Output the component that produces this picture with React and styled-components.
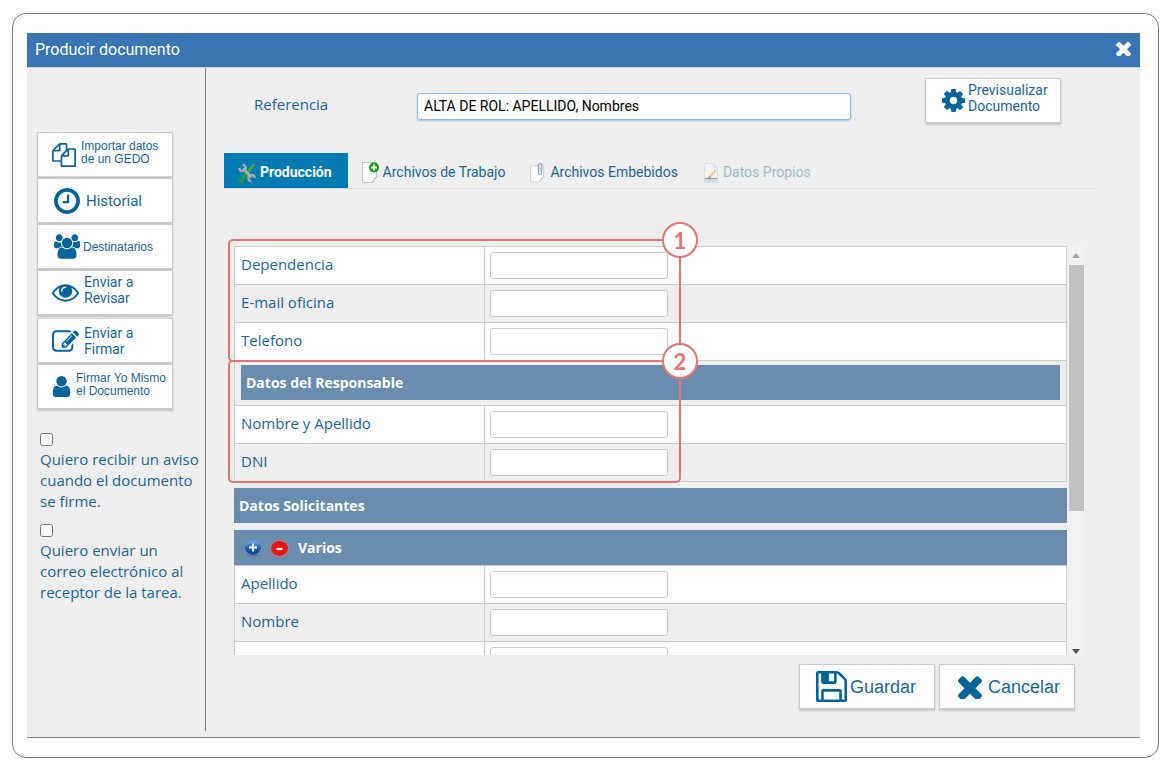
import React from "react";
import styled, { createGlobalStyle, css } from "styled-components";

const INK = "#1a6797";
const LINE = "#cccccc";
const PANEL = "#eeeeee";
const BAR = "#6a8caf";
const MARK = "#e57373";
const ARIAL = '"Liberation Sans", Arial, sans-serif';
const ROBOTO = 'Roboto, "Liberation Sans", sans-serif';
const OPEN = '"Open Sans", "Noto Sans", sans-serif';

const GlobalStyle = createGlobalStyle`
  *, *::before, *::after { box-sizing: border-box; }
  body { margin: 0; background: #fff; color: ${INK}; font: 15px/20px ${OPEN}; }
  button, input { font: inherit; color: inherit; }
`;

const Frame = styled.div`
  margin: 13px 15px 16px 12px;
  padding: 19px 18px 19px 14px;
  border: 1px solid #7d7d7d;
  border-radius: 14px;
`;

const Dialog = styled.section`
  background: ${PANEL};
  border-bottom: 1px solid #858585;
  padding-bottom: 6px;
`;

const TitleBar = styled.header`
  display: flex;
  align-items: center;
  justify-content: space-between;
  height: 35px;
  padding: 0 9px 1px 8px;
  background: #3975b3;
  border-bottom: 1px solid #c9d3de;
  color: #fff;
`;

const Title = styled.h1`
  margin: 0;
  font: 400 16px/20px ${ROBOTO};
`;

const CloseButton = styled.button`
  display: flex;
  padding: 0 0 2px;
  border: 0;
  background: none;
  cursor: pointer;
`;

const Body = styled.div`
  display: flex;
`;

const Sidebar = styled.aside`
  flex: 0 0 179px;
  padding: 64px 0 0 10px;
  border-right: 1px solid #858585;
`;

const ButtonGroup = styled.div`
  display: flex;
  flex-direction: column;
  gap: 1px;
  margin-bottom: 3px;
`;

const ActionButton = styled.button`
  display: flex;
  align-items: center;
  flex: none;
  gap: ${(p) => p.$gap ?? 5}px;
  width: 136px;
  height: 45px;
  padding: 0 0 0 ${(p) => p.$inset}px;
  border: 1px solid ${LINE};
  background: #fff;
  box-shadow: 0 2px 2px #c4c4c4;
  color: ${INK};
  font-family: ${(p) => (p.$roboto ? ROBOTO : ARIAL)};
  font-size: ${(p) => p.$size ?? 14}px;
  line-height: ${(p) => p.$line ?? 16}px;
  text-align: left;
  white-space: pre-line;
  cursor: pointer;
`;

const ButtonText = styled.span`
  padding-bottom: ${(p) => p.$raised ?? 0}px;
`;

const Notice = styled.div`
  display: flex;
  flex-direction: column;
  align-items: flex-start;
  gap: 3px;
  margin: ${(p) => (p.$first ? 24 : 12)}px 0 0 3px;
  line-height: 21px;
`;

const CheckBox = styled.input`
  width: 13px;
  height: 13px;
  margin: 0;
`;

const NoticeLabel = styled.label`
  white-space: pre;
`;

const Main = styled.main`
  flex: 1;
  min-width: 0;
  padding: 10px 45px 22px 18px;
`;

const ReferenceRow = styled.div`
  display: flex;
  align-items: flex-start;
  padding: 0 34px 0 30px;
`;

const ReferenceLabel = styled.label`
  flex: 0 0 163px;
  padding-top: 16px;
`;

const ReferenceInput = styled.input`
  flex: 1;
  min-width: 0;
  height: 27px;
  margin: 15px 74px 0 0;
  padding: 0 6px 2px;
  border: 1px solid #8fb9e3;
  border-radius: 3px;
  background: #fff;
  box-shadow: 0 1px 2px #9fc3e8;
  color: #000;
  font: 14px/20px ${ROBOTO};
`;

const Tabs = styled.nav`
  display: flex;
  height: 36px;
  margin-top: 30px;
  border-bottom: 1px solid #dddddd;
`;

const Tab = styled.button`
  display: flex;
  align-items: center;
  gap: 4px;
  height: 35px;
  padding: 2px 11px 0 14px;
  border: 0;
  background: none;
  color: ${INK};
  font: 14px/20px ${ROBOTO};
  white-space: nowrap;
  cursor: pointer;
  ${(p) =>
    p.$active &&
    css`
      padding: 2px 16px 0 14px;
      background: #047ab3;
      color: #fff;
      font-weight: 700;
    `}
  &:disabled {
    color: #9dbfd2;
    cursor: default;
  }
  svg {
    margin-top: 2px;
  }
`;

const FormArea = styled.div`
  position: relative;
  display: flex;
  height: 409px;
  margin: 57px 10px 0;
`;

const Scroller = styled.div`
  flex: 1;
  min-width: 0;
  overflow-y: auto;
  scrollbar-width: none;
`;

const Rows = styled.div`
  border: 1px solid ${LINE};
  border-top: 0;
  border-bottom-width: ${(p) => (p.$closed ? 1 : 0)}px;
`;

const Row = styled.div`
  display: grid;
  grid-template-columns: 250px 1fr;
  height: 38px;
  border-top: 1px solid ${LINE};
  background: ${(p) => (p.$shaded ? PANEL : "#fff")};
`;

const RowLabel = styled.label`
  padding: 7px 6px;
  border-right: 1px solid ${LINE};
`;

const FieldInput = styled.input`
  width: 178px;
  height: 27px;
  margin: 5px;
  padding: 0 6px;
  border: 1px solid ${LINE};
  border-radius: 3px;
  background: #fff;
`;

const NestedBar = styled.div`
  padding: 4px 6px 5px;
  border: 1px solid ${LINE};
  border-bottom: 0;
`;

const SectionBar = styled.h2`
  display: flex;
  align-items: center;
  height: 35px;
  margin: ${(p) => p.$top ?? 0}px 0 0;
  padding: 0 ${(p) => p.$inset ?? 5}px;
  background: ${BAR};
  color: #fff;
  font: 700 14px/20px ${OPEN};
`;

const RoundButton = styled.button`
  display: flex;
  margin-right: 8px;
  padding: 0;
  border: 0;
  background: none;
  cursor: pointer;
`;

const ScrollTrack = styled.div`
  display: flex;
  flex-direction: column;
  align-items: center;
  flex: 0 0 18px;
  padding: 7px 0 1px;
  background: #f1f1f1;
`;

const ScrollThumb = styled.div`
  width: 15px;
  height: 246px;
  margin: 7px 0 auto;
  background: #c1c1c1;
`;

const Arrow = styled.span`
  border: 4px solid transparent;
  ${(p) =>
    p.$down
      ? "border-top: 5px solid #505050; border-bottom: 0;"
      : "border-bottom: 5px solid #a3a3a3; border-top: 0;"}
`;

const Callout = styled.div`
  position: absolute;
  left: -6px;
  top: ${(p) => p.$top}px;
  width: 453px;
  height: 123px;
  border: 2px solid ${MARK};
  border-radius: 5px;
  pointer-events: none;
`;

const CalloutNumber = styled.span`
  position: absolute;
  top: -19px;
  right: -19px;
  width: 36px;
  height: 36px;
  border: 2px solid ${MARK};
  border-radius: 50%;
  background: #fff;
  color: ${MARK};
  font: 700 22px/33px Lato, sans-serif;
  text-align: center;
`;

const Footer = styled.footer`
  display: flex;
  justify-content: flex-end;
  gap: 4px;
  margin-top: 9px;
  padding-right: 20px;
`;

const PATHS = {
  times: ["110 302 1188 1188", "M1298 1322q0 40-28 68l-136 136q-28 28-68 28t-68-28l-294-294-294 294q-28 28-68 28t-68-28l-136-136q-28-28-28-68t28-68l294-294-294-294q-28-28-28-68t28-68l136-136q28-28 68-28t68 28l294 294 294-294q28-28 68-28t68 28l136 136q28 28 28 68t-28 68l-294 294 294 294q28 28 28 68z"],
  cog: ["128 128 1536 1536", "M1152 896q0-106-75-181t-181-75-181 75-75 181 75 181 181 75 181-75 75-181zm512-109v222q0 12-8 23t-20 13l-185 28q-19 54-39 91 35 50 107 138 10 12 10 25t-9 23q-27 37-99 108t-94 71q-12 0-26-9l-138-108q-44 23-91 38-16 136-29 186-7 28-36 28h-222q-14 0-24.5-8.5t-11.5-21.5l-28-184q-49-16-90-37l-141 107q-10 9-25 9-14 0-25-11-126-114-165-168-7-10-7-23 0-12 8-23 15-21 51-66.5t54-70.5q-27-50-41-99l-183-27q-13-2-21-12.5t-8-23.5v-222q0-12 8-23t19-13l186-28q14-46 39-92-40-57-107-138-10-12-10-24 0-10 9-23 26-36 98.5-107.5t94.5-71.5q13 0 26 10l138 107q44-23 91-38 16-136 29-186 7-28 36-28h222q14 0 24.5 8.5t11.5 21.5l28 184q49 16 90 37l142-107q9-9 24-9 13 0 25 10 129 119 165 170 7 8 7 22 0 12-8 23-15 21-51 66.5t-54 70.5q26 50 41 98l183 28q13 2 21 12.5t8 23.5z"],
  user: ["256 128 1280 1536", "M1536 1399q0 109-62.5 187t-150.5 78h-854q-88 0-150.5-78t-62.5-187q0-85 8.5-160.5t31.5-152 58.5-131 94-89 134.5-34.5q131 128 313 128t313-128q76 0 134.5 34.5t94 89 58.5 131 31.5 152 8.5 160.5zm-256-887q0 159-112.5 271.5t-271.5 112.5-271.5-112.5-112.5-271.5 112.5-271.5 271.5-112.5 271.5 112.5 112.5 271.5z"],
  clock: ["128 128 1536 1536", "M1024 544v448q0 14-9 23t-23 9h-320q-14 0-23-9t-9-23v-64q0-14 9-23t23-9h224v-352q0-14 9-23t23-9h64q14 0 23 9t9 23zm416 352q0-148-73-273t-198-198-273-73-273 73-198 198-73 273 73 273 198 198 273 73 273-73 198-198 73-273zm224 0q0 209-103 385.5t-279.5 279.5-385.5 103-385.5-103-279.5-279.5-103-385.5 103-385.5 279.5-279.5 385.5-103 385.5 103 279.5 279.5 103 385.5z"],
  files: ["0 0 1792 1792", "M1696 384q40 0 68 28t28 68v1216q0 40-28 68t-68 28h-960q-40 0-68-28t-28-68v-288h-544q-40 0-68-28t-28-68v-672q0-40 20-88t48-76l408-408q28-28 76-48t88-20h416q40 0 68 28t28 68v328q68-40 128-40h416zm-544 213l-299 299h299v-299zm-640-384l-299 299h299v-299zm196 647l316-316v-416h-384v416q0 40-28 68t-68 28h-416v640h512v-256q0-40 20-88t48-76zm956 804v-1152h-384v416q0 40-28 68t-68 28h-416v640h896z"],
  floppy: ["128 128 1536 1536", "M512 1536h768v-384h-768v384zm896 0h128v-896q0-14-10-38.5t-20-34.5l-281-281q-10-10-34-20t-39-10v416q0 40-28 68t-68 28h-576q-40 0-68-28t-28-68v-416h-128v1280h128v-416q0-40 28-68t68-28h832q40 0 68 28t28 68v416zm-384-928v-320q0-13-9.5-22.5t-22.5-9.5h-192q-13 0-22.5 9.5t-9.5 22.5v320q0 13 9.5 22.5t22.5 9.5h192q13 0 22.5-9.5t9.5-22.5zm640 32v928q0 40-28 68t-68 28h-1344q-40 0-68-28t-28-68v-1344q0-40 28-68t68-28h928q40 0 88 20t76 48l280 280q28 28 48 76t20 88z"],
  edit: ["0 128 1784 1408", "M888 1184l116-116-152-152-116 116v56h96v96h56zm440-720q-16-16-33 1l-350 350q-17 17-1 33t33-1l350-350q17-17 1-33zm80 594v190q0 119-84.5 203.5t-203.5 84.5h-832q-119 0-203.5-84.5t-84.5-203.5v-832q0-119 84.5-203.5t203.5-84.5h832q63 0 117 25 15 7 18 23 3 17-9 29l-49 49q-14 14-32 8-23-6-45-6h-832q-66 0-113 47t-47 113v832q0 66 47 113t113 47h832q66 0 113-47t47-113v-126q0-13 9-22l64-64q15-15 35-7t20 29zm-96-738l288 288-672 672h-288v-288zm444 132l-92 92-288-288 92-92q28-28 68-28t68 28l152 152q28 28 28 68t-28 68z"],
  eye: ["0 384 1792 1152", "M1664 960q-152-236-381-353 61 104 61 225 0 185-131.5 316.5t-316.5 131.5-316.5-131.5-131.5-316.5q0-121 61-225-229 117-381 353 133 205 333.5 326.5t434.5 121.5 434.5-121.5 333.5-326.5zm-720-384q0-20-14-34t-34-14q-125 0-214.5 89.5t-89.5 214.5q0 20 14 34t34 14 34-14 14-34q0-86 61-147t147-61q20 0 34-14t14-34zm848 384q0 34-20 69-140 230-376.5 368.5t-499.5 138.5-499.5-139-376.5-368q-20-35-20-69t20-69q140-229 376.5-368t499.5-139 499.5 139 376.5 368q20 35 20 69z"],
  users: ["-64 0 1920 1792", "M529 896q-162 5-265 128h-134q-82 0-138-40.5t-56-118.5q0-353 124-353 6 0 43.5 21t97.5 42.5 119 21.5q67 0 133-23-5 37-5 66 0 159 93 293zm1071 637q0 120-73 189.5t-194 69.5h-874q-121 0-194-69.5t-73-189.5q0-53 3.5-103.5t14-109 26.5-108.5 43-97.5 62-81 85.5-53.5 111.5-20q10 0 43 21.5t73 48 107 48 135 21.5 135-21.5 107-48 73-48 43-21.5q61 0 111.5 20t85.5 53.5 62 81 43 97.5 26.5 108.5 14 109 3.5 103.5zm-1024-1277q0 106-75 181t-181 75-181-75-75-181 75-181 181-75 181 75 75 181zm704 384q0 159-112.5 271.5t-271.5 112.5-271.5-112.5-112.5-271.5 112.5-271.5 271.5-112.5 271.5 112.5 112.5 271.5zm576 225q0 78-56 118.5t-138 40.5h-134q-103-123-265-128 93-134 93-293 0-29-5-66 66 23 133 23 59 0 119-21.5t97.5-42.5 43.5-21q124 0 124 353zm-128-609q0 106-75 181t-181 75-181-75-75-181 75-181 181-75 181 75 75 181z"],
};

const Svg = styled.svg`
  display: block;
  flex: none;
`;

function Icon({ name, w, h, color = "#04649a" }) {
  const [box, d] = PATHS[name];
  return (
    <Svg width={w} height={h} viewBox={box} fill={color} aria-hidden="true">
      <path d={d} />
    </Svg>
  );
}

const ToolsIcon = () => (
  <Svg width="18" height="20" viewBox="0 0 18 20" fill="none" aria-hidden="true">
    <path d="M15.500 2 9 10" stroke="#2fa94f" strokeWidth="3" strokeLinecap="round" />
    <path d="M8 11.500 2.500 18" stroke="#25983f" strokeWidth="4" strokeLinecap="round" />
    <path d="M5 5.500 13.500 14.500" stroke="#a9adb0" strokeWidth="3" />
    <path d="M4.500 1.800A3.200 3.200 0 1 1 1.300 5" stroke="#a9adb0" strokeWidth="2.200" />
    <path d="M13.500 18.300A3.200 3.200 0 1 1 16.800 15" stroke="#a9adb0" strokeWidth="2.200" />
  </Svg>
);

const Sheet = ({ stroke = "#c4c4c4", top = 2 }) => (
  <>
    <path d={`M.5 ${top + 0.5}H14.500V15L10 20.500H.5Z`} fill="#fbfbfb" stroke={stroke} />
    <path d="M10 20.500Q11.500 16 14.500 15Z" fill="#d5d5d5" stroke={stroke} />
  </>
);

const AddFileIcon = () => (
  <Svg width="17" height="21" viewBox="0 0 17 21" aria-hidden="true">
    <Sheet top={0} />
    <circle cx="12" cy="5.500" r="5" fill="#12a012" />
    <path d="M12 2.500v6M9 5.500h6" stroke="#fff" strokeWidth="2" />
  </Svg>
);

const ClipFileIcon = () => (
  <Svg width="16" height="21" viewBox="0 0 17 21" fill="none" aria-hidden="true">
    <Sheet top={3} stroke="#cfcfcf" />
    <path d="M12.500 4.500v6q0 2-1.800 2t-1.800-2V3.500q0-2.500 2-2.500t2 2.500" stroke="#86aac6" strokeWidth="1.300" />
    <path d="M10.800 4.500v5.500" stroke="#86aac6" />
  </Svg>
);

const OwnDataIcon = () => (
  <Svg width="16" height="20" viewBox="0 0 16 20" opacity="0.550" aria-hidden="true">
    <path d="M1.500 .5H10.500L14.500 4.500V18.500H1.500Z" fill="#f4f7fb" stroke="#c7d3e2" />
    <path d="M10.500 .5V4.500H14.500Z" fill="#d9e3ef" stroke="#c7d3e2" />
    <path d="M1 15.500H15V19.500H1Z" fill="#b7cbe2" />
    <path d="M2 15.500H14" stroke="#555" />
    <path d="M6.500 14 12.500 7.500" stroke="#f0b23c" strokeWidth="2.400" />
    <path d="M5.500 15.200 7 13.500" stroke="#554" strokeWidth="1.500" />
  </Svg>
);

const AddIcon = () => (
  <Svg width="18" height="18" viewBox="0 0 18 18" aria-hidden="true">
    <defs>
      <linearGradient id="blueBall" x2="0" y2="1">
        <stop offset="0" stopColor="#6fb0f0" />
        <stop offset=".55" stopColor="#1a5fc0" />
        <stop offset="1" stopColor="#0c3f94" />
      </linearGradient>
    </defs>
    <ellipse cx="9" cy="16" rx="6" ry="1" fill="#5a7ba1" />
    <ellipse cx="9" cy="8.500" rx="8" ry="7" fill="url(#blueBall)" />
    <path d="M9 4.500v8M5 8.500h8" stroke="#fff" strokeWidth="1.800" />
  </Svg>
);

const RemoveIcon = () => (
  <Svg width="20" height="18" viewBox="0 0 20 18" aria-hidden="true">
    <ellipse cx="9.500" cy="9.500" rx="9" ry="8" fill="#e11919" stroke="#b98d93" />
    <path d="M6.500 10h6" stroke="#fff" strokeWidth="2.200" />
  </Svg>
);

function Field({ id, label, shaded }) {
  return (
    <Row $shaded={shaded}>
      <RowLabel htmlFor={id}>{label}</RowLabel>
      <div>
        <FieldInput id={id} type="text" />
      </div>
    </Row>
  );
}

export default function App() {
  return (
    <>
      <GlobalStyle />
      <Frame>
        <Dialog>
          <TitleBar>
            <Title>Producir documento</Title>
            <CloseButton type="button" aria-label="Cerrar">
              <Icon name="times" w={15} h={15} color="#fff" />
            </CloseButton>
          </TitleBar>
          <Body>
            <Sidebar>
              <ButtonGroup>
                <ActionButton type="button" $inset={14} $gap={5} $size={12} $line={13}>
                  <Icon name="files" w={24} h={24} />
                  <ButtonText $raised={4}>{"Importar datos\nde un GEDO"}</ButtonText>
                </ActionButton>
                <ActionButton type="button" $inset={16} $gap={6} $size={15} $roboto>
                  <Icon name="clock" w={26} h={26} />
                  <ButtonText>Historial</ButtonText>
                </ActionButton>
                <ActionButton type="button" $inset={16} $gap={3} $size={12}>
                  <Icon name="users" w={26} h={25} />
                  <ButtonText>Destinatarios</ButtonText>
                </ActionButton>
                <ActionButton type="button" $inset={14} $gap={5} $roboto>
                  <Icon name="eye" w={27} h={18} />
                  <ButtonText $raised={6}>{"Enviar a\nRevisar"}</ButtonText>
                </ActionButton>
              </ButtonGroup>
              <ButtonGroup>
                <ActionButton type="button" $inset={14} $gap={5} $roboto>
                  <Icon name="edit" w={27} h={22} />
                  <ButtonText>{"Enviar a\nFirmar"}</ButtonText>
                </ActionButton>
                <ActionButton type="button" $inset={14} $gap={5} $size={12} $line={13}>
                  <Icon name="user" w={19} h={21} />
                  <ButtonText $raised={4}>{"Firmar Yo Mismo\nel Documento"}</ButtonText>
                </ActionButton>
              </ButtonGroup>
              <Notice $first>
                <CheckBox id="aviso" type="checkbox" />
                <NoticeLabel htmlFor="aviso">
                  {"Quiero recibir un aviso\ncuando el documento\nse firme."}
                </NoticeLabel>
              </Notice>
              <Notice>
                <CheckBox id="correo" type="checkbox" />
                <NoticeLabel htmlFor="correo">
                  {"Quiero enviar un\ncorreo electrónico al\nreceptor de la tarea."}
                </NoticeLabel>
              </Notice>
            </Sidebar>
            <Main>
              <ReferenceRow>
                <ReferenceLabel htmlFor="referencia">Referencia</ReferenceLabel>
                <ReferenceInput
                  id="referencia"
                  type="text"
                  defaultValue="ALTA DE ROL: APELLIDO, Nombres"
                />
                <ActionButton type="button" $inset={16} $gap={3} $roboto>
                  <Icon name="cog" w={23} h={23} />
                  <ButtonText $raised={6}>{"Previsualizar\nDocumento"}</ButtonText>
                </ActionButton>
              </ReferenceRow>
              <Tabs>
                <Tab type="button" $active>
                  <ToolsIcon />
                  Producción
                </Tab>
                <Tab type="button">
                  <AddFileIcon />
                  Archivos de Trabajo
                </Tab>
                <Tab type="button">
                  <ClipFileIcon />
                  Archivos Embebidos
                </Tab>
                <Tab type="button" disabled>
                  <OwnDataIcon />
                  Datos Propios
                </Tab>
              </Tabs>
              <FormArea>
                <Scroller>
                  <Rows>
                    <Field id="dependencia" label="Dependencia" />
                    <Field id="email" label="E-mail oficina" shaded />
                    <Field id="telefono" label="Telefono" />
                  </Rows>
                  <NestedBar>
                    <SectionBar>Datos del Responsable</SectionBar>
                  </NestedBar>
                  <Rows $closed>
                    <Field id="responsable" label="Nombre y Apellido" />
                    <Field id="dni" label="DNI" shaded />
                  </Rows>
                  <SectionBar $top={6}>Datos Solicitantes</SectionBar>
                  <SectionBar $top={7} $inset={10}>
                    <RoundButton type="button" aria-label="Agregar">
                      <AddIcon />
                    </RoundButton>
                    <RoundButton type="button" aria-label="Quitar">
                      <RemoveIcon />
                    </RoundButton>
                    Varios
                  </SectionBar>
                  <Rows $closed>
                    <Field id="apellido" label="Apellido" />
                    <Field id="nombre" label="Nombre" shaded />
                    <Field id="otro" label="" />
                  </Rows>
                </Scroller>
                <ScrollTrack>
                  <Arrow />
                  <ScrollThumb />
                  <Arrow $down />
                </ScrollTrack>
                <Callout $top={-7}>
                  <CalloutNumber>1</CalloutNumber>
                </Callout>
                <Callout $top={114}>
                  <CalloutNumber>2</CalloutNumber>
                </Callout>
              </FormArea>
              <Footer>
                <ActionButton type="button" $inset={16} $gap={3} $size={18} $line={20}>
                  <Icon name="floppy" w={31} h={31} />
                  <ButtonText>Guardar</ButtonText>
                </ActionButton>
                <ActionButton type="button" $inset={18} $gap={6} $size={18} $line={20}>
                  <Icon name="times" w={24} h={24} />
                  <ButtonText>Cancelar</ButtonText>
                </ActionButton>
              </Footer>
            </Main>
          </Body>
        </Dialog>
      </Frame>
    </>
  );
}
